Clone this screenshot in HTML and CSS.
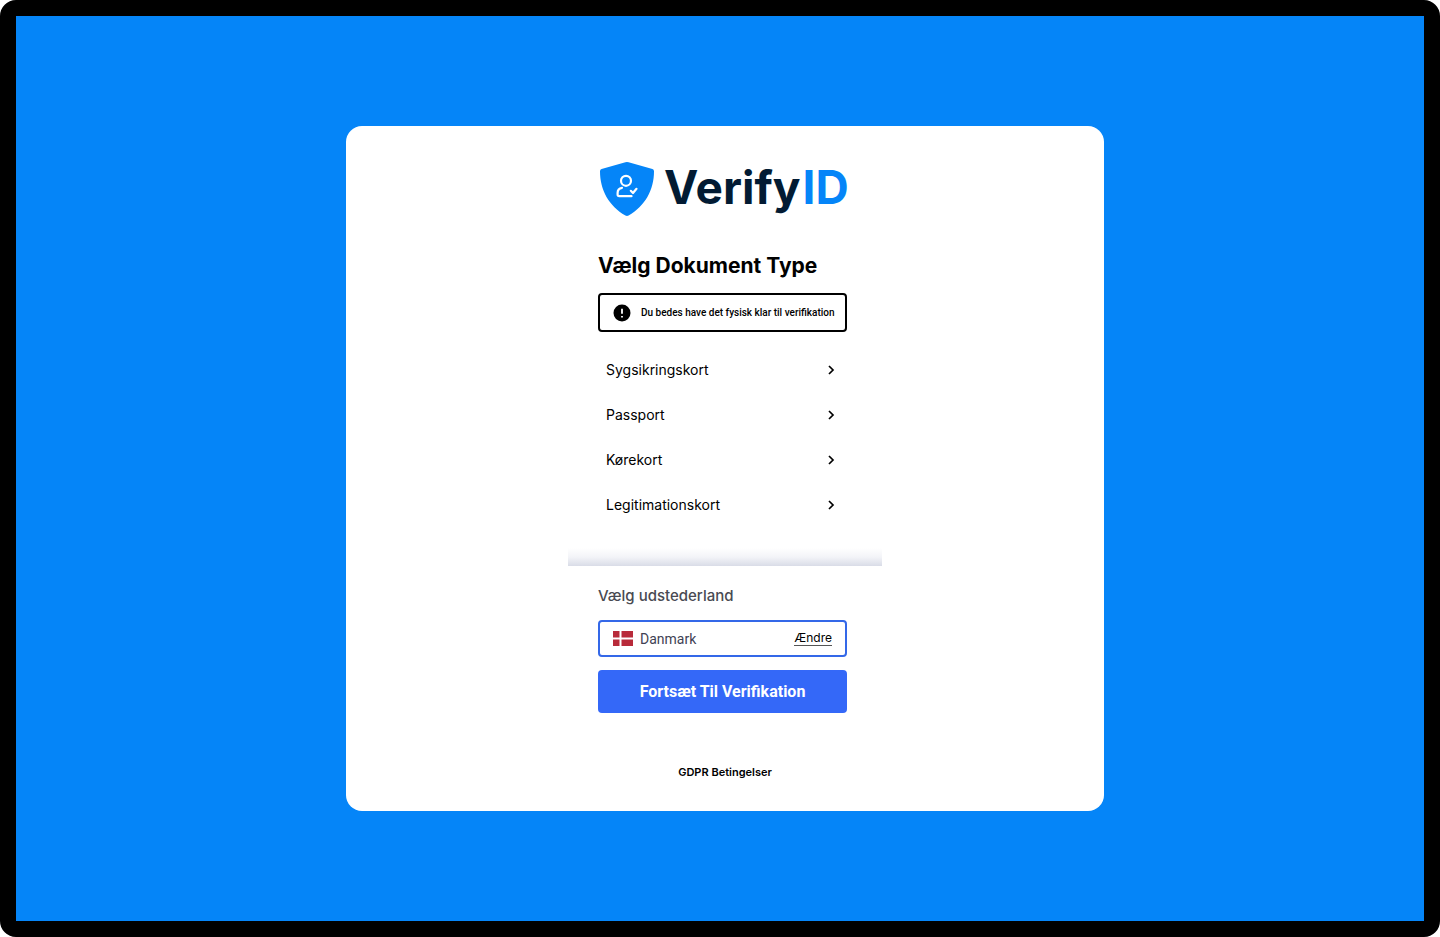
FILE: index.html
```html
<!DOCTYPE html>
<html lang="da">
<head>
  <meta charset="utf-8">
  <meta name="viewport" content="width=device-width, initial-scale=1">
  <title>VerifyID</title>
  <link rel="stylesheet" href="styles.css">
</head>
<body>
  <div class="frame">
    <main class="card">
      <div class="section">
        <div class="logo">
          <svg class="logo-shield" viewBox="0 0 54 54" aria-hidden="true">
            <path fill="#0585f8" d="M25.400.3Q27-.2 28.600.3L52.400 7Q54 7.500 54 9.200C54 28 45 44 28.600 53.500Q27 54.300 25.400 53.500C9 44 0 28 0 9.200Q0 7.500 1.600 7Z"/>
            <g fill="none" stroke="#fff" stroke-width="2.200" stroke-linecap="round" stroke-linejoin="round">
              <circle cx="26" cy="18.800" r="5"/>
              <path d="M22 25.800C19 26.300 17.600 28.500 17.600 31V32.500Q17.600 34.200 19.300 34.200H31.500"/>
              <path d="M30.800 28.800L33 31L36.500 26.800"/>
            </g>
          </svg>
          <span class="logo-text">Verify</span>
          <span class="logo-text logo-id">ID</span>
        </div>

        <h1>Vælg Dokument Type</h1>

        <div class="notice">
          <svg class="notice-icon" viewBox="0 0 18 18" aria-hidden="true">
            <circle cx="9" cy="9" r="8.500"/>
            <path d="M9 4.800V9.800M9 12V13.500" stroke="#fff" stroke-width="1.800"/>
          </svg>
          <span>Du bedes have det fysisk klar til verifikation</span>
        </div>

        <ul class="documents">
          <li><a href="#">Sygsikringskort <svg class="arrow" viewBox="0 0 10 10"><path d="M3 1L7 5L3 9"/></svg></a></li>
          <li><a href="#">Passport <svg class="arrow" viewBox="0 0 10 10"><path d="M3 1L7 5L3 9"/></svg></a></li>
          <li><a href="#">Kørekort <svg class="arrow" viewBox="0 0 10 10"><path d="M3 1L7 5L3 9"/></svg></a></li>
          <li><a href="#">Legitimationskort <svg class="arrow" viewBox="0 0 10 10"><path d="M3 1L7 5L3 9"/></svg></a></li>
        </ul>
      </div>

      <div class="divider"></div>

      <div class="section">
        <h2>Vælg udstederland</h2>

        <div class="country">
          <svg class="flag" viewBox="0 0 20 15" aria-hidden="true">
            <path fill="#b82a3a" d="M0 0H6.500V6.500H0ZM8.500 0H20V6.500H8.500ZM0 8.500H6.500V15H0ZM8.500 8.500H20V15H8.500Z"/>
          </svg>
          <span class="country-name">Danmark</span>
          <a href="#" class="change">Ændre</a>
        </div>

        <button type="button" class="continue">Fortsæt Til Verifikation</button>
      </div>

      <a href="#" class="terms">GDPR Betingelser</a>
    </main>
  </div>
</body>
</html>
```

FILE: styles.css
```css
* {
  box-sizing: border-box;
}

body {
  margin: 0;
  background-color: #fff;
  font-family: Inter, sans-serif;
  color: #000;
}

a {
  color: inherit;
  text-decoration: none;
}

.frame {
  display: flex;
  justify-content: center;
  align-items: center;
  min-height: 100vh;
  padding-left: 10px;
  border: 16px solid #000;
  border-radius: 16px;
  background-color: #0585f8;
}

.card {
  display: flex;
  flex-direction: column;
  align-items: center;
  width: 100%;
  max-width: 758px;
  padding: 36px 20px 29px;
  border-radius: 16px;
  background-color: #fff;
}

.section {
  width: 100%;
  max-width: 314px;
  padding: 0 35px 0 30px;
}

/* Logo */
.logo {
  display: flex;
  height: 54px;
  padding-left: 2px;
}

.logo-shield {
  flex: none;
  width: 54px;
  height: 54px;
  margin-right: 10px;
}

.logo-text {
  font-size: 46px;
  font-weight: 700;
  line-height: 50px;
  color: #021b33;
}

.logo-id {
  margin-left: 2px;
  color: #0585f8;
}

h1 {
  margin: 36px 0 13px;
  font-size: 21px;
  font-weight: 700;
  line-height: 28px;
  white-space: nowrap;
}

/* Notice */
.notice {
  display: flex;
  align-items: center;
  gap: 10px;
  height: 39px;
  padding: 0 13px;
  border: 2px solid #000;
  border-radius: 4px;
  font-family: Roboto, sans-serif;
  font-size: 10px;
  font-weight: 500;
  white-space: nowrap;
}

.notice-icon {
  flex: none;
  width: 18px;
  height: 18px;
}

/* Document types */
.documents {
  margin: 15px 0 0;
  padding: 0;
  list-style: none;
}

.documents a {
  display: flex;
  justify-content: space-between;
  align-items: center;
  height: 45px;
  padding: 0 11px 0 8px;
  font-size: 14px;
}

.arrow {
  width: 10px;
  height: 10px;
  fill: none;
  stroke: #000;
  stroke-width: 1.7;
}

.divider {
  width: 100%;
  max-width: 314px;
  height: 18px;
  margin-top: 21px;
  background: linear-gradient(#fff, #f3f4f8 50%, #d9dce7);
}

h2 {
  margin: 20px 0 14px;
  font-size: 15px;
  font-weight: 500;
  line-height: 20px;
  color: #494a52;
}

/* Country */
.country {
  display: flex;
  align-items: center;
  height: 37px;
  padding: 0 13px;
  border: 2px solid #3468e8;
  border-radius: 4px;
}

.flag {
  width: 20px;
  height: 15px;
  margin-right: 7px;
}

.country-name {
  font-family: Roboto, sans-serif;
  font-size: 14px;
  color: #3f4254;
}

.change {
  margin-left: auto;
  border-bottom: 1px solid #555;
  font-size: 12px;
  line-height: 14px;
}

.continue {
  width: 100%;
  height: 43px;
  margin-top: 13px;
  border: 0;
  border-radius: 4px;
  background-color: #3468f8;
  color: #fff;
  font-family: Roboto, sans-serif;
  font-size: 16px;
  font-weight: 700;
  cursor: pointer;
}

.terms {
  margin-top: 49px;
  font-size: 11px;
  font-weight: 600;
  line-height: 20px;
}
```
